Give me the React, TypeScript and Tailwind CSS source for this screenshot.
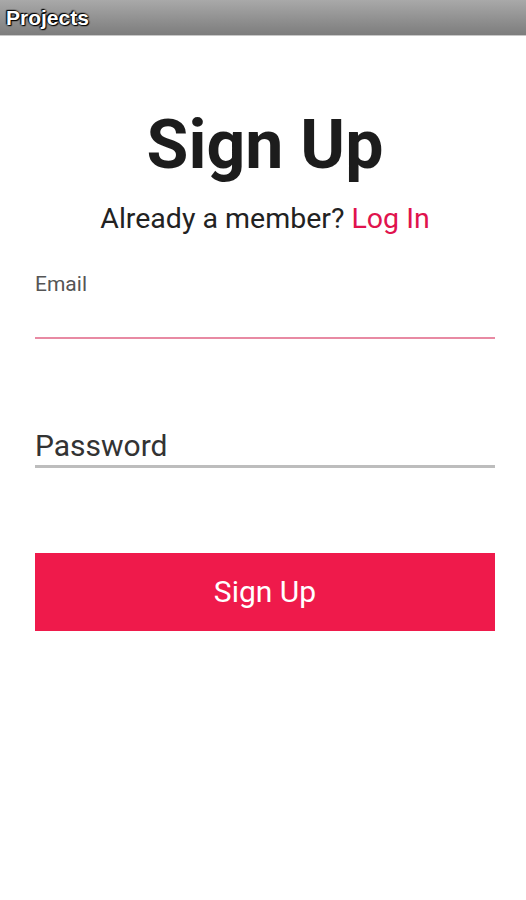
import React from "react";

const App: React.FC = () => {
  return (
    <div className="w-[526px] h-[900px] bg-white" style={{ fontFamily: "Roboto, sans-serif" }}>
      <div className="h-[36px] bg-gradient-to-b from-[#a9a9a9] to-[#7d7d7d] border-b border-[#c8c8c8] flex items-center px-[6px]">
        <span
          className="text-white font-bold text-[21px] leading-none"
          style={{ fontFamily: "'Liberation Sans', Arial, sans-serif", textShadow: "0 0 2px #000, 0 0 2px #000, 1px 1px 1px #000, -1px -1px 1px #000" }}
        >
          Projects
        </span>
      </div>
      <div className="pl-[35px] pr-[31px]">
        <h1 className="text-center font-bold text-[#1c1c1c] text-[68px] leading-none mt-[75px]">Sign Up</h1>
        <p className="text-center text-[28.5px] text-[#222] mt-[26px] leading-none">
          Already a member? <span className="text-[#e0134d]">Log In</span>
        </p>
        <div className="mt-[40px]">
          <label className="block text-[21px] text-[#555] leading-none">Email</label>
          <div className="h-[42px]"></div>
          <div className="h-[2px] bg-[#e88aa3]"></div>
        </div>
        <div className="mt-[92px]">
          <div className="text-[30px] text-[#333] leading-none pb-[4px]">Password</div>
          <div className="h-[3px] bg-[#bdbdbd]"></div>
        </div>
        <button className="mt-[85px] w-full h-[78px] bg-[#ef1a4b] text-white text-[30px]">Sign Up</button>
      </div>
    </div>
  );
};

export default App;
